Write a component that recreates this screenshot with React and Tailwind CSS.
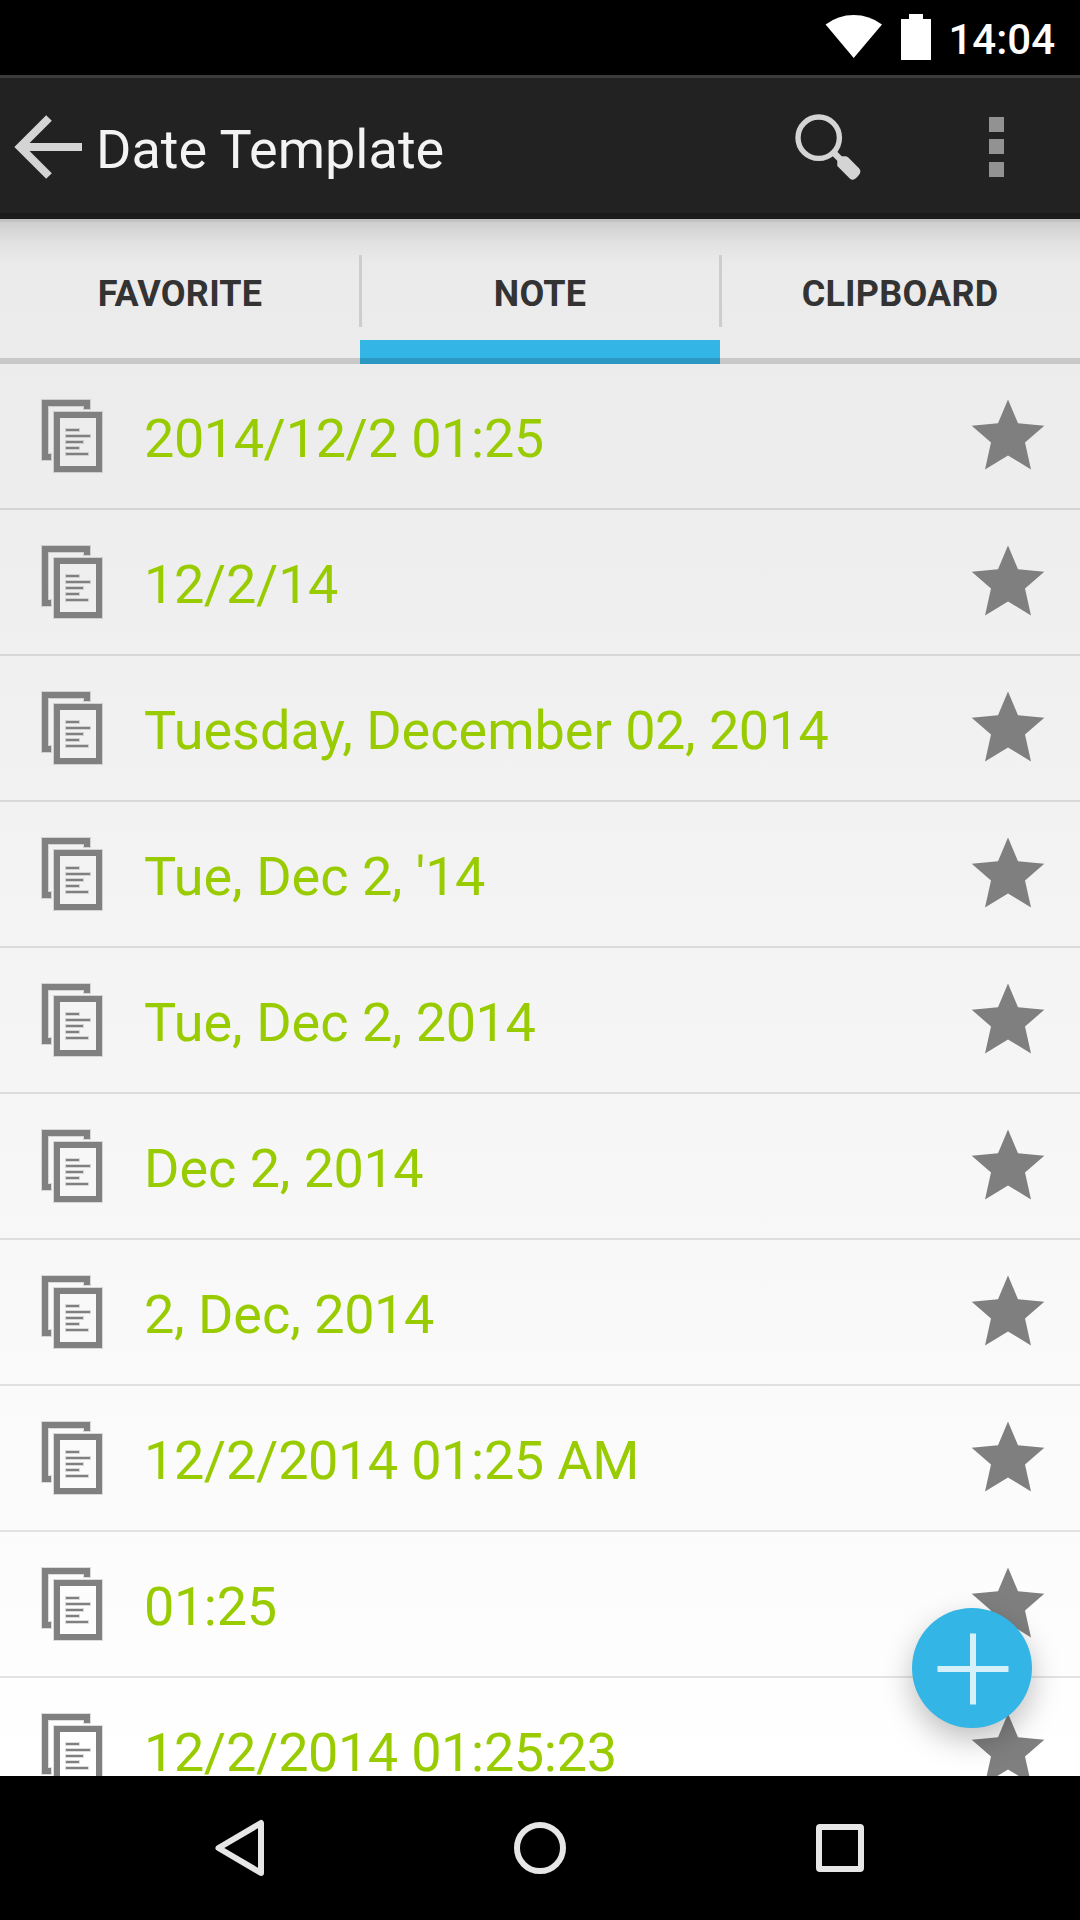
import React from "react";

const ITEMS = [
  "2014/12/2 01:25",
  "12/2/14",
  "Tuesday, December 02, 2014",
  "Tue, Dec 2, '14",
  "Tue, Dec 2, 2014",
  "Dec 2, 2014",
  "2, Dec, 2014",
  "12/2/2014 01:25 AM",
  "01:25",
  "12/2/2014 01:25:23",
];

const TABS = ["FAVORITE", "NOTE", "CLIPBOARD"];

function StatusBar() {
  return (
    <div className="flex h-[75px] shrink-0 items-start justify-end bg-black pr-[25px] text-white">
      <svg className="mt-[14px] h-[46px] w-[58px]" viewBox="0 0 58 46" fill="#fff">
        <path d="M0.6 10.5Q13 1 28.7 1T57 10.5L28.7 44Z" />
      </svg>
      <svg className="mt-[14px] ml-[18px] h-[46px] w-[30px]" viewBox="0 0 30 46" fill="#fff">
        <path d="M8 0H22V5H30V46H0V5H8Z" />
      </svg>
      <span className="mt-[15px] ml-[17px] text-[42px] leading-[50px] font-medium">14:04</span>
    </div>
  );
}

function ActionBar() {
  return (
    <div className="flex h-[144px] shrink-0 items-start border-t-[3px] border-b-[6px] border-t-[#3c3b3c] border-b-[#1b1b1b] bg-[#222]">
      <svg className="mt-[36px] ml-[14px] h-[66px] w-[68px]" viewBox="0 0 68 66" fill="none" stroke="#d4d4d4" strokeWidth="8">
        <path d="M35 4L6 33L35 62M6 33H68" />
      </svg>
      <span className="mt-[40px] ml-[14px] text-[54px] leading-[64px] text-[#f3f3f3]">Date Template</span>
      <div className="grow" />
      <svg className="mt-[36px] mr-[128px] h-[68px] w-[66px]" viewBox="0 0 66 68" fill="none" stroke="#d4d4d4">
        <circle cx="23.7" cy="23.7" r="20.7" strokeWidth="5.4" />
        <path d="M37.5 37.5L46 46" strokeWidth="6.4" />
        <path
          d="M43.5 44.5Q45 42.3 48 42.3H50Q52 42.3 53.3 43.6L64 54.3Q67 57.5 63.5 61.5Q59 67.5 55 64.8L42.3 52V47Z"
          fill="#d4d4d4"
          stroke="none"
        />
      </svg>
      <div className="mt-[39px] mr-[76px] flex flex-col">
        <span className="size-[15px] bg-[#929292]" />
        <span className="mt-[7px] size-[15px] bg-[#929292]" />
        <span className="mt-[8px] size-[15px] bg-[#929292]" />
      </div>
    </div>
  );
}

function Tabs() {
  return (
    <div className="relative grid h-[145px] shrink-0 grid-cols-3 border-b-[6px] border-black/15">
      <div className="absolute inset-x-0 top-0">
        <div className="h-[3px] bg-black/[0.17]" />
        <div className="h-[41px] bg-linear-to-b from-black/[0.12] via-black/[0.04] via-50% to-transparent" />
      </div>
      {TABS.map((tab, i) => (
        <div key={tab} className="relative flex justify-center">
          {i > 0 && <span className="absolute top-[36px] -left-px h-[72px] w-[3px] bg-[#cdcdcd]" />}
          <span className="mt-[54px] text-[36px] leading-[42px] font-bold tracking-[0.2px] text-[#333]">{tab}</span>
          {tab === "NOTE" && (
            <span className="absolute inset-x-0 -bottom-[6px] h-[24px] border-b-[6px] border-[#2b98c3] bg-[#33b5e5]" />
          )}
        </div>
      ))}
    </div>
  );
}

function CopyIcon() {
  return (
    <svg className="mt-[34px] ml-[40px] h-[76px] w-[64px] shrink-0" viewBox="40 398 64 76" fill="none">
      <g stroke="#000" strokeOpacity="0.13" strokeWidth="2">
        <path d="M42 400H90V409H84V406H48V454H51V460H42Z" />
        <path d="M54 412H102V472H54Z" />
        <path d="M66 429H79V431H66ZM66 435H90V437H66ZM66 441H83V443H66ZM66 447H79V449H66ZM66 453H88V455H66Z" />
      </g>
      <g fill="#808080">
        <path d="M42 400H90V409H84V406H48V454H51V460H42Z" />
        <path fillRule="evenodd" d="M54 412H102V472H54ZM60 418H96V466H60Z" />
        <path d="M66 429H79V431H66ZM66 435H90V437H66ZM66 441H83V443H66ZM66 447H79V449H66ZM66 453H88V455H66Z" />
      </g>
    </svg>
  );
}

// Digits are set slightly tighter than letters.
function DateText({ text }) {
  return text.split(/(\d+)/).map((part, i) =>
    i % 2 ? (
      <span key={i} className="tracking-[-0.47px]">
        {part}
      </span>
    ) : (
      part
    )
  );
}

function Row({ text }) {
  return (
    <div className="flex h-[146px] shrink-0 items-start border-b-2 border-black/10">
      <CopyIcon />
      <span className="mt-[43px] ml-[40px] grow text-[54px] leading-[64px] whitespace-nowrap text-[#99cc00]">
        <DateText text={text} />
      </span>
      <svg className="mt-[35px] mr-[35px] h-[72px] w-[74px] shrink-0" viewBox="971 399 74 72" fill="#7f7f7f">
        <path d="M1008 399.5L1018 423.3L1044.3 425.8L1025 442.5L1031 469.5L1008 455.5L985 469.5L991 442.5L971.7 425.8L998 423.3Z" />
      </svg>
    </div>
  );
}

function NavBar() {
  return (
    <div className="flex h-[144px] shrink-0 items-center justify-center bg-black">
      <svg className="h-[60px] w-[54px]" viewBox="213 1818 54 60" fill="none" stroke="#e6e6e6" strokeWidth="6" strokeLinejoin="round">
        <path d="M218.5 1848L261 1823V1873Z" />
      </svg>
      <svg className="ml-[246px] h-[54px] w-[54px]" viewBox="0 0 54 54" fill="none" stroke="#e6e6e6" strokeWidth="6">
        <circle cx="27" cy="27" r="23" />
      </svg>
      <svg className="mr-[3px] ml-[249px] h-[48px] w-[48px]" viewBox="0 0 48 48" fill="none" stroke="#e6e6e6" strokeWidth="6" strokeLinejoin="round">
        <rect x="3" y="3" width="42" height="42" rx="1" />
      </svg>
    </div>
  );
}

export default function App() {
  return (
    <div className="relative flex h-[1920px] w-[1080px] flex-col overflow-hidden font-[Roboto,sans-serif]">
      <StatusBar />
      <ActionBar />
      <div className="flex h-[1557px] shrink-0 flex-col overflow-hidden bg-linear-to-b from-[#eaeaea] to-white">
        <Tabs />
        {ITEMS.map((t) => (
          <Row key={t} text={t} />
        ))}
      </div>
      <NavBar />
      <button
        aria-label="Add"
        className="absolute top-[1608px] left-[912px] size-[120px] rounded-full bg-[#33b5e5] shadow-[0_12px_30px_rgba(0,0,0,0.25)]"
      >
        <svg className="size-[120px]" viewBox="0 0 120 120" fill="#d6f0fa">
          <path d="M58 25.5H64V58H96.5V64H64V96.5H58V64H25.5V58H58Z" />
        </svg>
      </button>
    </div>
  );
}
